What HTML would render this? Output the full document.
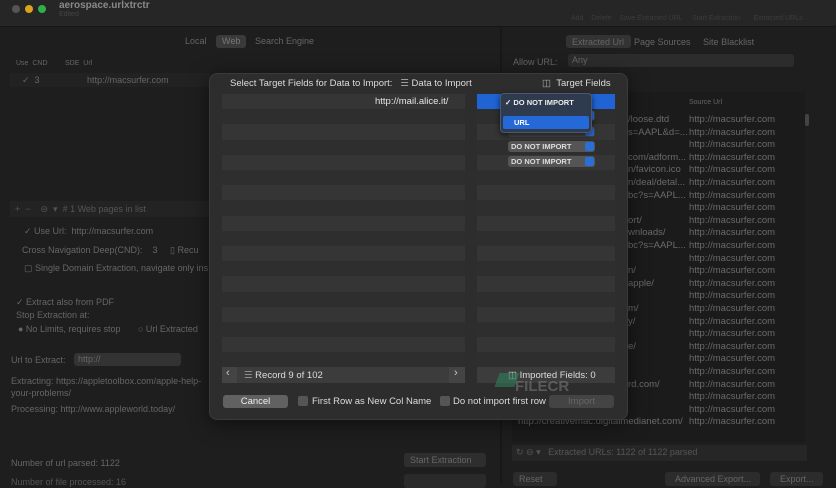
<!DOCTYPE html>
<html><head><meta charset="utf-8"><style>
*{margin:0;padding:0;box-sizing:border-box}
body{width:836px;height:484px;overflow:hidden;background:#1e1e1e;font-family:"Liberation Sans",sans-serif;font-size:9px;color:#6f6f6f;position:relative}
.a{position:absolute;white-space:nowrap}
.dim{color:#5e5e5e}
.row{position:absolute;left:0;right:0;height:15.2px}
.src{position:absolute;left:689px;color:#6a6a6a;font-size:9.5px}
.lc{position:absolute;color:#6a6a6a;font-size:9.5px}
.pop{position:absolute;left:508px;width:87px;height:11px;background:#555;border-radius:3px;color:#ddd;font-size:7.5px;font-weight:bold;padding:1px 0 0 3px}
.pop i{position:absolute;right:1px;top:1px;width:9px;height:9px;background:#2a6fd6;border-radius:2px}
</style></head><body>
<div class="a" style="left:0;top:0;width:836px;height:26px;background:#262626"></div>
<div class="a" style="left:12px;top:5px;width:8px;height:8px;border-radius:50%;background:#555"></div>
<div class="a" style="left:25px;top:5px;width:8px;height:8px;border-radius:50%;background:#d9a31c"></div>
<div class="a" style="left:38px;top:5px;width:8px;height:8px;border-radius:50%;background:#2fb04a"></div>
<div class="a" style="left:59px;top:0px;font-size:10px;font-weight:bold;color:#8a8a8a">aerospace.urlxtrctr</div>
<div class="a" style="left:59px;top:11px;font-size:7px;color:#444">Edited</div>
<div class="a dim" style="left:571px;top:15px;font-size:7px;color:#3c3c3c">Add &nbsp;&nbsp; Delete &nbsp;&nbsp; Save Extracted URL &nbsp;&nbsp;&nbsp; Start Extraction &nbsp;&nbsp;&nbsp;&nbsp;&nbsp; Extracted URLs</div>
<div class="a" style="left:0;top:26px;width:836px;height:1px;background:#161616"></div>
<div class="a" style="left:185px;top:36px;color:#666">Local</div>
<div class="a" style="left:216px;top:35px;width:30px;height:13px;background:#3a3a3a;border-radius:3px"></div>
<div class="a" style="left:222px;top:36px;color:#777">Web</div>
<div class="a" style="left:255px;top:36px;color:#666">Search Engine</div>
<div class="a" style="left:16px;top:60px;font-size:7px;color:#666">Use &nbsp;CND &nbsp;&nbsp;&nbsp;&nbsp;&nbsp;&nbsp;&nbsp; SDE &nbsp;Url</div>
<div class="a" style="left:10px;top:73px;width:200px;height:14px;background:#222"></div>
<div class="a" style="left:22px;top:75px;color:#666">✓ &nbsp;3 &nbsp;&nbsp;&nbsp;&nbsp;&nbsp;&nbsp;&nbsp;&nbsp;&nbsp;&nbsp;&nbsp;&nbsp;&nbsp;&nbsp;&nbsp;&nbsp;&nbsp; http://macsurfer.com</div>
<div class="a" style="left:10px;top:201px;width:200px;height:16px;background:#232323"></div>
<div class="a" style="left:15px;top:204px;color:#555">+ &nbsp;− &nbsp;&nbsp; ⊖ &nbsp;▾ &nbsp;# 1 Web pages in list</div>
<div class="a" style="left:24px;top:226px;color:#666">✓ Use Url: &nbsp;http://macsurfer.com</div>
<div class="a" style="left:22px;top:245px;color:#666">Cross Navigation Deep(CND): &nbsp;&nbsp;&nbsp;3 &nbsp;&nbsp;&nbsp;&nbsp;▯ Recu</div>
<div class="a" style="left:24px;top:263px;color:#666">▢ Single Domain Extraction, navigate only ins</div>
<div class="a" style="left:16px;top:297px;color:#666">✓ Extract also from PDF</div>
<div class="a" style="left:16px;top:310px;color:#666">Stop Extraction at:</div>
<div class="a" style="left:18px;top:324px;color:#666">● No Limits, requires stop &nbsp;&nbsp;&nbsp;&nbsp;&nbsp; ○ Url Extracted</div>
<div class="a" style="left:11px;top:355px;color:#666">Url to Extract:</div>
<div class="a" style="left:74px;top:353px;width:107px;height:13px;background:#333;border-radius:3px;color:#666;padding:1px 4px">http://</div>
<div class="a" style="left:11px;top:375px;color:#666;line-height:12px">Extracting: https://appletoolbox.com/apple-help-<br>your-problems/</div>
<div class="a" style="left:11px;top:404px;color:#666">Processing: http://www.appleworld.today/</div>
<div class="a" style="left:11px;top:458px;color:#666">Number of url parsed: 1122</div>
<div class="a" style="left:11px;top:477px;color:#555">Number of file processed: 16</div>
<div class="a" style="left:404px;top:453px;width:82px;height:14px;background:#2e2e2e;border-radius:3px;color:#666;padding:2px 6px">Start Extraction</div>
<div class="a" style="left:404px;top:474px;width:82px;height:14px;background:#2a2a2a;border-radius:3px"></div>
<div class="a" style="left:500px;top:27px;width:2px;height:457px;background:#181818"></div>
<div class="a" style="left:566px;top:35px;width:65px;height:13px;background:#333;border-radius:3px"></div>
<div class="a" style="left:572px;top:37px;color:#666">Extracted Url &nbsp;&nbsp; Page Sources &nbsp;&nbsp;&nbsp; Site Blacklist</div>
<div class="a" style="left:513px;top:57px;color:#666">Allow URL:</div>
<div class="a" style="left:568px;top:54px;width:226px;height:13px;background:#2c2c2c;border-radius:3px;color:#666;padding:1px 4px">Any</div>
<div class="a" style="left:512px;top:92px;width:293px;height:350px;background:#1b1b1b"></div>
<div class="a" style="left:689px;top:99px;font-size:7px;color:#666">Source Url</div>
<div class="a" style="left:805px;top:114px;width:4px;height:12px;background:#444;border-radius:2px"></div>
<div id="rl"></div>
<div class="a" style="left:512px;top:445px;width:295px;height:16px;background:#262626"></div>
<div class="a" style="left:516px;top:447px;color:#555">↻ ⊖ ▾ &nbsp; Extracted URLs: 1122 of 1122 parsed</div>
<div class="a" style="left:513px;top:472px;width:44px;height:14px;background:#2c2c2c;border-radius:3px;color:#666;padding:2px 6px">Reset</div>
<div class="a" style="left:665px;top:472px;width:95px;height:14px;background:#2c2c2c;border-radius:3px;color:#666;padding:2px 10px">Advanced Export...</div>
<div class="a" style="left:770px;top:472px;width:53px;height:14px;background:#2c2c2c;border-radius:3px;color:#666;padding:2px 10px">Export...</div>
<div class="a" style="left:209px;top:73px;width:419px;height:347px;background:#2d2d2d;border-radius:8px;border:1px solid #3a3a3a;box-shadow:0 4px 20px rgba(0,0,0,.5)"></div>
<div class="a" style="left:230px;top:78px;font-size:9.5px;color:#ddd">Select Target Fields for Data to Import: &nbsp;&nbsp;<span style="color:#aaa">☰</span> Data to Import</div>
<div class="a" style="left:542px;top:78px;font-size:9.5px;color:#ddd"><span style="color:#aaa">◫</span> &nbsp;Target Fields</div>
<div class="a" style="left:222px;top:94px;width:243px;height:273px;background:#2f2f2f;overflow:hidden" id="lt"></div>
<div class="a" style="left:477px;top:94px;width:138px;height:273px;background:#2f2f2f;overflow:hidden" id="rt"></div>
<div class="a" style="left:375px;top:96px;font-size:9.5px;color:#e6e6e6">http://mail.alice.it/</div>
<div class="a" style="left:477px;top:94px;width:138px;height:15px;background:#1f63d4"></div>
<div class="pop" style="top:141px">DO NOT IMPORT<i></i></div>
<div class="pop" style="top:156px">DO NOT IMPORT<i></i></div>
<div class="pop" style="top:126px;background:#444"><i></i></div>
<div class="pop" style="top:110px;background:#444"><i></i></div>
<div class="a" style="left:500px;top:93px;width:92px;height:40px;background:#2e3a4e;border:1px solid #4a5870;border-radius:4px;box-shadow:0 2px 6px rgba(0,0,0,.6)"></div>
<div class="a" style="left:505px;top:98px;font-size:7.5px;font-weight:bold;color:#eee">✓ DO NOT IMPORT</div>
<div class="a" style="left:503px;top:116px;width:86px;height:13px;background:#2568d8;border-radius:2px;color:#fff;font-size:7.5px;font-weight:bold;padding:2px 0 0 11px">URL</div>
<div class="a" style="left:222px;top:367px;width:243px;height:16px;background:#3c3c3c"></div>
<div class="a" style="left:222px;top:367px;width:15px;height:16px;background:#444;color:#ccc;font-size:11px;padding-left:4px">‹</div>
<div class="a" style="left:449px;top:367px;width:16px;height:16px;background:#444;color:#ccc;font-size:11px;padding-left:5px">›</div>
<div class="a" style="left:244px;top:370px;font-size:9.5px;color:#ddd"><span style="color:#999">☰</span> Record 9 of 102</div>
<div class="a" style="left:477px;top:367px;width:138px;height:16px;background:#3c3c3c"></div>
<div class="a" style="left:508px;top:370px;font-size:9.5px;color:#ddd">◫ Imported Fields: 0</div>
<div class="a" style="left:515px;top:378px;font-size:15px;font-weight:bold;color:#777;opacity:.6">FILECR</div>
<div class="a" style="left:497px;top:373px;width:20px;height:14px;background:#2e7d5b;opacity:.6;transform:skewX(-20deg)"></div>
<div class="a" style="left:223px;top:395px;width:65px;height:13px;background:#616161;border-radius:3px;color:#eee;font-size:9.5px;text-align:center;padding-top:1px">Cancel</div>
<div class="a" style="left:298px;top:396px;width:10px;height:10px;background:#555;border-radius:2px"></div>
<div class="a" style="left:312px;top:396px;font-size:9.5px;color:#ddd">First Row as New Col Name</div>
<div class="a" style="left:440px;top:396px;width:10px;height:10px;background:#555;border-radius:2px"></div>
<div class="a" style="left:453px;top:396px;font-size:9.5px;color:#ddd">Do not import first row</div>
<div class="a" style="left:549px;top:395px;width:65px;height:13px;background:#444;border-radius:3px;color:#666;font-size:9.5px;text-align:center;padding-top:1px">Import</div>
<script>
var lt=document.getElementById('lt'),rt=document.getElementById('rt'),h='';
for(var i=0;i<18;i++){h+='<div class="row" style="top:'+(i*15.2)+'px;background:'+(i%2?'#2e2e2e':'#353535')+'"></div>';}
lt.innerHTML=h;rt.innerHTML=h;
var L=["/loose.dtd","s=AAPL&d=...","","com/adform...","n/favicon.ico","n/deal/detal...","bc?s=AAPL...","","ort/","wnloads/","bc?s=AAPL...","","n/","apple/","","m/","y/","","e/","","","rd.com/","","http://www.bgr.com/","http://creativemac.digitalmedianet.com/"];
var s='';
for(var j=0;j<25;j++){var t=114+j*12.6;
 s+='<div class="src a" style="top:'+t+'px">http://macsurfer.com</div>';
 if(L[j]){var x=L[j].indexOf('http')==0?518:628;if(t<395&&x==518)x=-999; s+='<div class="lc a" style="left:'+x+'px;top:'+t+'px">'+L[j]+'</div>';}
}
document.getElementById('rl').outerHTML=s;
</script>
</body></html>
